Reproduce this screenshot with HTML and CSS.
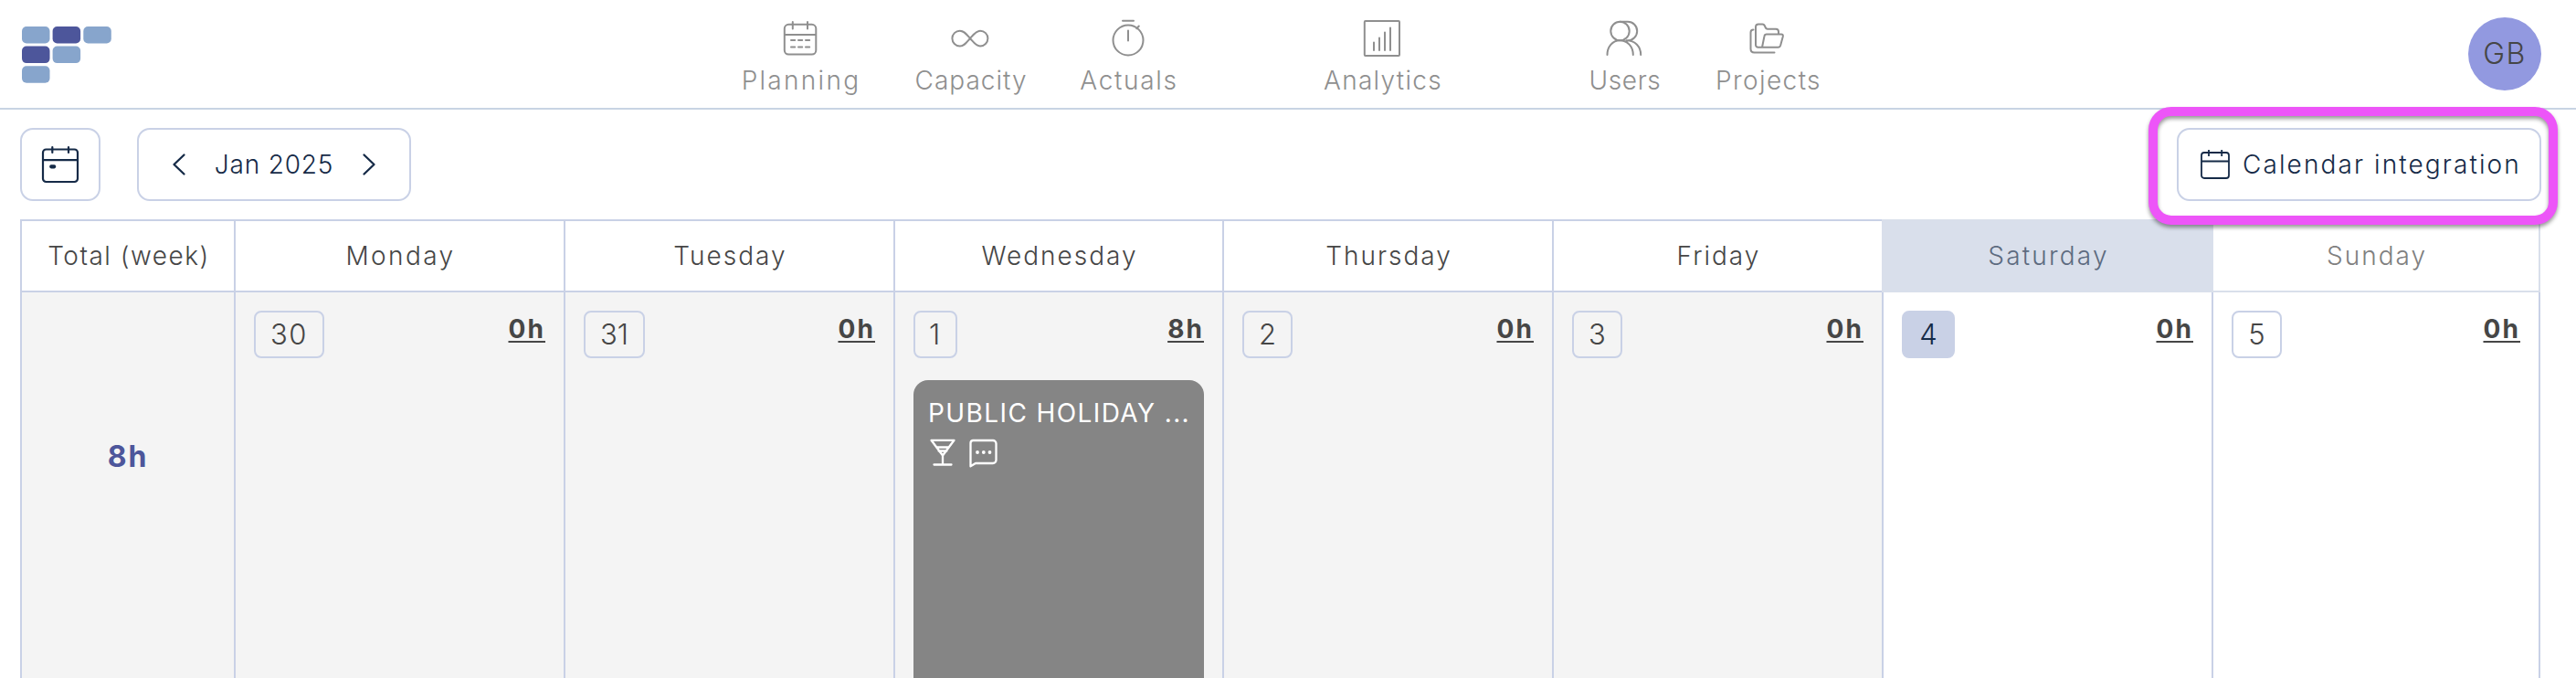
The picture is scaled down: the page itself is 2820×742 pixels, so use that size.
FILE: index.html
```html
<!DOCTYPE html>
<html lang="en">
<head>
<meta charset="utf-8">
<title>Calendar</title>
<link rel="stylesheet" href="styles.css">
</head>
<body>
<header class="topbar">
  <svg class="logo" width="98" height="63" viewBox="0 0 98 63">
    <g fill="#87a5cc"><rect x="0" y="0" width="30.5" height="18.5" rx="5"/><rect x="67.300" y="0" width="30.500" height="18.500" rx="5"/><rect x="33.600" y="21.600" width="30.500" height="18.500" rx="5"/><rect x="0" y="43.200" width="30.500" height="18.500" rx="5"/></g>
    <g fill="#4d569b"><rect x="33.600" y="0" width="30.500" height="18.500" rx="5"/><rect x="0" y="21.600" width="30.500" height="18.500" rx="5"/></g>
  </svg>
  <nav class="nav">
    <a class="nav-item planning">
      <svg class="nav-icon" viewBox="0 0 44 44"><rect x="4.800" y="6.800" width="34.500" height="32.800" rx="4.500"/><path d="M5 18H39M13.800 4V11.500M30 4V11.500"/><path class="dashes" d="M12 24H16.200M20 24H24.200M28 24H32.200M12 31.500H16.200M20 31.500H24.200M28 31.500H32.200"/></svg>
      <span class="nav-label">Planning</span>
    </a>
    <a class="nav-item capacity">
      <svg class="nav-icon" viewBox="0 0 44 44"><path d="M22 22C18 17.500 15.500 13.700 10.800 13.700A8.400 8.400 0 0 0 10.800 30.500C15.500 30.500 18 26.500 22 22S28.500 13.700 33 13.700A8.400 8.400 0 0 1 33 30.500C28.500 30.500 26 26.500 22 22Z"/></svg>
      <span class="nav-label">Capacity</span>
    </a>
    <a class="nav-item actuals">
      <svg class="nav-icon" viewBox="0 0 44 44"><circle cx="22" cy="24" r="16.500"/><path d="M16 2.800H28M22 13.500V24.500M31.300 11.300L33.800 8.500"/></svg>
      <span class="nav-label">Actuals</span>
    </a>
    <a class="nav-item analytics">
      <svg class="nav-icon" viewBox="0 0 44 44"><rect x="2.800" y="2.900" width="38.200" height="38.200" rx="1"/><path d="M13 26.500V35M19 21.500V35M25 15.500V35M31 10.500V35"/></svg>
      <span class="nav-label">Analytics</span>
    </a>
    <a class="nav-item users">
      <svg class="nav-icon" viewBox="0 0 44 44"><circle cx="17.500" cy="14" r="10.200"/><path d="M17.500 3.800H26A10.200 10.200 0 0 1 26 24.200H24.500M3.500 40C3.500 31.500 9 24.200 17.500 24.200S31.800 31.500 31.800 40M24.500 24.200C34 24.200 40.200 31 40.200 40"/></svg>
      <span class="nav-label">Users</span>
    </a>
    <a class="nav-item projects">
      <svg class="nav-icon" viewBox="0 0 44 44"><path d="M12 31.800H11.500A2.500 2.500 0 0 1 9 29.300V9.500A3 3 0 0 1 12 6.500H16.500C20 6.500 18.500 11.800 22 11.800H31A3 3 0 0 1 34 14.800V17.500M12 31.800H33.500C35.300 31.800 35.800 30.800 36.200 29.500L38.800 20C39.200 18.500 38.500 17.500 37 17.500H21C19.500 17.500 18.700 18.200 18.500 19.500L16 31.800M6.500 12.500C4.500 12.500 3.500 13.500 3.500 15.500V33.500Q3.500 37.500 7.500 37.500H29.500"/></svg>
      <span class="nav-label">Projects</span>
    </a>
  </nav>
  <div class="avatar">GB</div>
</header>

<div class="toolbar">
  <button class="btn today">
    <svg class="icon-today" viewBox="0 0 40 40"><rect x="1" y="3.500" width="38" height="35.500" rx="3.500"/><path d="M2 15.200H38M11.300 1V7M29 1V7"/><rect class="solid" x="8.200" y="20.200" width="7" height="4.200" rx="1.800"/></svg>
  </button>
  <div class="btn month">
    <svg class="chevron" viewBox="0 0 14 24"><path d="M12.500 1.500L1.500 12L12.500 22.500"/></svg>
    <span class="month-label">Jan 2025</span>
    <svg class="chevron" viewBox="0 0 14 24"><path d="M1.500 1.500L12.500 12L1.500 22.500"/></svg>
  </div>
  <button class="btn integration">
    <svg class="icon-cal" viewBox="0 0 32 32"><rect x="1" y="3" width="30" height="28" rx="3"/><path d="M1 12.500H31M9 0V7M23.200 0V7"/></svg>
    <span class="integration-label">Calendar integration</span>
    <span class="highlight"></span>
  </button>
</div>

<main class="calendar">
  <div class="head total-head">Total (week)</div>
  <div class="head mon">Monday</div>
  <div class="head tue">Tuesday</div>
  <div class="head wed">Wednesday</div>
  <div class="head thu">Thursday</div>
  <div class="head fri">Friday</div>
  <div class="head sat">Saturday</div>
  <div class="head sun">Sunday</div>

  <div class="cell total">8h</div>
  <div class="cell"><div class="day-row"><span class="date two">30</span><span class="hours">0h</span></div></div>
  <div class="cell"><div class="day-row"><span class="date thirty-one">31</span><span class="hours">0h</span></div></div>
  <div class="cell">
    <div class="day-row"><span class="date first">1</span><span class="hours">8h</span></div>
    <article class="event">
      <div class="event-title">PUBLIC HOLIDAY ...</div>
      <div class="event-icons">
        <svg width="28" height="30" viewBox="0 0 28 30"><path d="M1.500 1.800H26.500L14 18.500ZM14 18.500V28.500M4.500 28.500H23.500M7 9.500H21M9.500 13.500H18.500"/></svg>
        <svg width="32" height="32" viewBox="0 0 32 32"><path d="M5 2H27A3.500 3.500 0 0 1 30.500 5.500V23.500A3.500 3.500 0 0 1 27 27H8L2.500 30.300V5A3 3 0 0 1 5 2Z"/><g class="dots"><circle cx="10" cy="15" r="1.900"/><circle cx="16.800" cy="15" r="1.900"/><circle cx="23.500" cy="15" r="1.900"/></g></svg>
      </div>
    </article>
  </div>
  <div class="cell"><div class="day-row"><span class="date">2</span><span class="hours">0h</span></div></div>
  <div class="cell"><div class="day-row"><span class="date">3</span><span class="hours">0h</span></div></div>
  <div class="cell weekend"><div class="day-row"><span class="date current">4</span><span class="hours">0h</span></div></div>
  <div class="cell weekend"><div class="day-row"><span class="date">5</span><span class="hours">0h</span></div></div>
</main>
</body>
</html>
```
FILE: styles.css
```css
* { box-sizing: border-box; }

body {
  margin: 0;
  height: 742px;
  overflow: hidden;
  display: flex;
  flex-direction: column;
  background: #fff;
  color: #464646;
  font-family: Inter, "Open Sans", sans-serif;
  font-size: 28px;
  font-weight: 330;
}

svg { fill: none; stroke: currentColor; flex: none; overflow: visible; }
.logo { stroke: none; }

/* Top bar */
.topbar {
  height: 120px;
  flex: none;
  display: flex;
  border-bottom: 2px solid #c8d4e3;
  padding: 0 38px 0 23.5px;
}
.logo { margin-top: 28.5px; }
.nav { display: flex; margin-left: 690.5px; padding-top: 20px; color: #8f8f8f; }
.nav-item { display: flex; flex-direction: column; align-items: center; white-space: nowrap; }
.nav-icon { width: 44px; height: 44px; stroke-width: 2; stroke-linecap: round; stroke-linejoin: round; }
.nav-label { margin-top: 7px; padding-left: 2px; line-height: 34px; }
.planning { width: 128px; letter-spacing: 2.3px; margin-right: 60px; }
.capacity { width: 124px; letter-spacing: 1px; margin-right: 57px; }
.actuals { width: 108px; letter-spacing: 1.7px; margin-right: 158px; }
.analytics { width: 132px; letter-spacing: 1.3px; margin-right: 160px; }
.users { width: 78px; letter-spacing: 0.6px; margin-right: 61px; }
.projects { width: 114px; letter-spacing: 1.4px; }
.avatar {
  width: 80px;
  height: 80px;
  margin: 19px 0 0 auto;
  border-radius: 50%;
  background: #9299e0;
  font-size: 32px;
  letter-spacing: 1.5px;
  line-height: 80px;
  text-align: center;
}

/* Toolbar */
.toolbar { height: 120px; flex: none; display: flex; padding: 20px 38px 20px 22px; color: #152a47; }
.btn {
  position: relative;
  height: 80px;
  display: flex;
  align-items: center;
  border: 2px solid #c9d1e6;
  border-radius: 14px;
  background: #fff;
  padding: 0;
  color: inherit;
  font: inherit;
  white-space: nowrap;
}
.today { width: 88px; justify-content: center; }
.icon-today { width: 40px; height: 40px; stroke-width: 2.2; stroke-linecap: round; }
.icon-today .solid { fill: currentColor; stroke: none; }
.month { width: 300px; margin-left: 40px; padding: 0 37px; justify-content: space-between; }
.chevron { width: 14px; height: 24px; stroke-width: 2.3; stroke-linecap: round; stroke-linejoin: round; }
.month-label { letter-spacing: 0.8px; }
.integration { width: 399px; margin-left: auto; padding-left: 24px; }
.icon-cal { width: 32px; height: 32px; stroke-width: 1.8; }
.integration-label { margin-left: 14px; letter-spacing: 2.1px; }
.highlight {
  position: absolute;
  left: -33px;
  top: -25px;
  width: 448px;
  height: 129px;
  border: 10px solid #ed55f8;
  border-radius: 25px;
  filter: drop-shadow(0 3px 2px rgba(0, 0, 0, 0.4));
  z-index: 1;
}

/* Calendar grid */
.calendar {
  flex: none;
  width: 2759px;
  height: 502px;
  margin-left: 22px;
  display: grid;
  grid-template-columns: 234px 361px 361px 360px 361px 361px 361px 360px;
  grid-template-rows: 80px 422px;
}
.head {
  border: solid #c9d1e6;
  border-width: 2px 0 2px 2px;
  padding-left: 2px;
  line-height: 76px;
  text-align: center;
  white-space: nowrap;
  letter-spacing: 2px;
}
.total-head { letter-spacing: 1.5px; }
.mon { letter-spacing: 2.4px; }
.sat { background: #d9dfeb; border-color: #d9dfeb; color: #5d6b80; letter-spacing: 2.2px; }
.sun { border-color: #d9dfeb; border-right-width: 2px; color: #808080; }
.cell {
  min-width: 0;
  background: #f4f4f4;
  border-left: 2px solid #c9d1e6;
  padding: 20px 20px 0;
}
.cell:last-child { border-right: 2px solid #c9d1e6; }
.weekend { background: #fff; }
.total {
  padding: 162px 0 0;
  color: #4d569b;
  font-size: 32px;
  font-weight: 700;
  line-height: 36px;
  letter-spacing: 2px;
  text-align: center;
}
.day-row { display: flex; justify-content: space-between; align-items: flex-start; }
.date {
  width: 55px;
  height: 52px;
  border: 2px solid #c9d1e6;
  border-radius: 8px;
  font-size: 31px;
  line-height: 48px;
  text-align: center;
}
.two { width: 77px; letter-spacing: 1.5px; }
.thirty-one { width: 67px; }
.first { width: 48px; padding-right: 2px; }
.current { width: 58px; background: #c9d1e6; color: #152a47; }
.hours {
  font-weight: 700;
  line-height: 40px;
  letter-spacing: 2.1px;
  text-decoration: underline 2px;
  text-underline-offset: 3px;
  text-decoration-skip-ink: none;
}

.event {
  height: 326px;
  margin-top: 24px;
  padding: 18px 16px 0;
  border-radius: 16px 16px 0 0;
  background: #858585;
  color: #fff;
}
.event-title { font-weight: 400; line-height: 36px; letter-spacing: 1.4px; white-space: nowrap; }
.event-icons { display: flex; gap: 14px; margin: 10px 0 0 2px; }
.event-icons svg { stroke-width: 2.3; stroke-linejoin: round; stroke-linecap: round; }
.event-icons .dots { fill: currentColor; stroke: none; }
```
